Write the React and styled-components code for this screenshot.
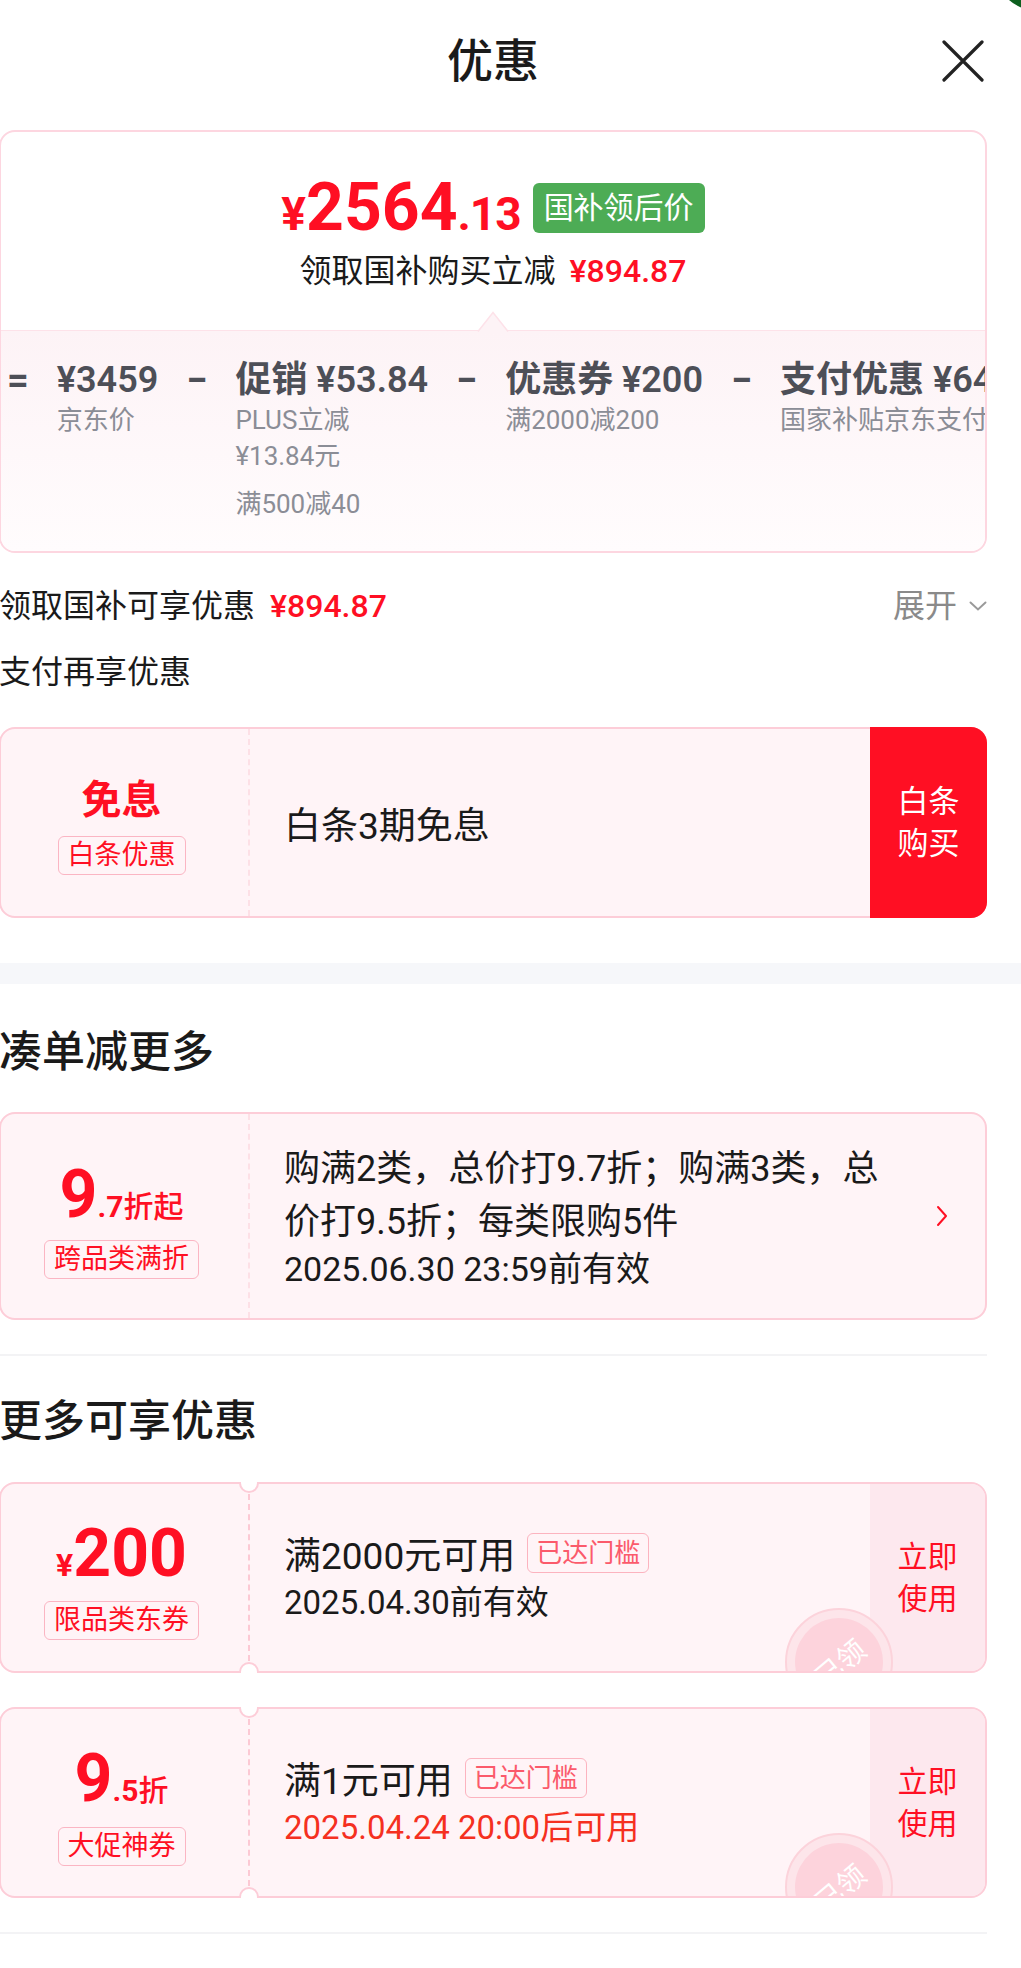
import React from 'react'
import styled, { createGlobalStyle } from 'styled-components'

const RED = '#ff0f23'
const PINK_BORDER = '#fdcdd8'

const GlobalStyle = createGlobalStyle`
  html, body {
    margin: 0;
    padding: 0;
    background: #ffffff;
  }
  body {
    font-family: Roboto, "Noto Sans CJK SC", sans-serif;
    color: #1a1a1a;
    overflow-x: hidden;
  }
`

const Page = styled.div`
  position: relative;
  width: 1021px;
  min-height: 1968px;
  overflow: hidden;
  background: #ffffff;
`

const Panel = styled.div`
  width: 988px;
  margin-left: -1px;
  display: flex;
  flex-direction: column;
`

// header
const Header = styled.header`
  height: 122px;
  display: grid;
  grid-template-columns: 1fr auto 1fr;
  align-items: center;
`

const Title = styled.h1`
  grid-column: 2;
  margin: 0;
  font-size: 46px;
  font-weight: 500;
  line-height: 1;
  color: #1a1a1a;
`

const CloseButton = styled.button`
  grid-column: 3;
  justify-self: end;
  margin-right: 3px;
  width: 42px;
  height: 42px;
  padding: 0;
  border: none;
  background: none;
  display: flex;
`

const CornerMark = styled.svg`
  position: absolute;
  top: 0;
  right: 0;
`

// summary card
const SummaryCard = styled.section`
  margin-top: 8px;
  border: 2px solid #fdd6e0;
  border-radius: 16px;
  overflow: hidden;
`

const SummaryTop = styled.div`
  position: relative;
  height: 198px;
  box-sizing: border-box;
  padding-top: 51px;
  display: flex;
  flex-direction: column;
  align-items: center;
`

const PriceRow = styled.div`
  display: flex;
  align-items: center;
  gap: 12px;
  height: 50px;
`

const Price = styled.div`
  color: ${RED};
  font-weight: 700;
  display: flex;
  align-items: baseline;
  line-height: 1;
`

const PricePart = styled.span`
  font-size: ${p => p.$size}px;
  letter-spacing: ${p => p.$tight ? '-1px' : '0'};
`

const GreenTag = styled.span`
  height: 50px;
  line-height: 50px;
  padding: 0 11px;
  border-radius: 6px;
  background: #4dac55;
  color: #ffffff;
  font-size: 30px;
`

const SubLine = styled.div`
  margin-top: 18px;
  font-size: 32px;
  line-height: 40px;
  color: #1a1a1a;
`

const RedAmount = styled.span`
  color: ${RED};
  font-weight: 500;
  margin-left: ${p => p.$gap || 14}px;
`

const Notch = styled.svg`
  position: absolute;
  bottom: -2px;
  left: 50%;
  transform: translateX(-50%);
`

const Breakdown = styled.div`
  height: 221px;
  box-sizing: border-box;
  border-top: 1.5px solid #fde2e9;
  background: linear-gradient(#fdf3f6, #fffcfd);
  padding: 27px 0 0 6px;
  display: flex;
  align-items: flex-start;
  gap: 28px;
  white-space: nowrap;
  overflow: hidden;
`

const Sign = styled.span`
  font-size: 38px;
  font-weight: 700;
  line-height: 44px;
  color: #4d4f57;
`

const BreakItem = styled.div`
  display: flex;
  flex-direction: column;
`

const BreakValue = styled.span`
  font-size: 36px;
  font-weight: 600;
  line-height: 44px;
  color: #4d4f57;
`

const BreakNote = styled.span`
  font-size: 26px;
  line-height: 36px;
  color: #8b8d96;
  margin-top: ${p => p.$gap || 0}px;
`

// info rows
const InfoRow = styled.div`
  margin-top: ${p => p.$top}px;
  height: 40px;
  display: flex;
  align-items: center;
  justify-content: space-between;
  font-size: 32px;
  line-height: 40px;
`

const Expand = styled.span`
  display: flex;
  align-items: center;
  gap: 12px;
  color: #8a8a8a;
`

const SectionTitle = styled.h2`
  margin: ${p => p.$top}px 0 0;
  font-size: 43px;
  font-weight: 500;
  line-height: 50px;
  color: #1a1a1a;
`

const Band = styled.div`
  margin-top: 45px;
  height: 21px;
  background: #f6f7fa;
`

const Divider = styled.div`
  margin-top: ${p => p.$top}px;
  height: 2px;
  background: #f3f3f5;
`

// offer cards
const Card = styled.div`
  position: relative;
  margin-top: ${p => p.$top}px;
  height: ${p => p.$h}px;
  box-sizing: border-box;
  display: flex;
  border: 2px solid ${PINK_BORDER};
  border-radius: 16px;
  background: #fff4f7;
`

const LeftCol = styled.div`
  flex: 0 0 241px;
  padding: ${p => p.$pt || 0}px 6px 0 0;
  border-right: 2px dashed ${p => p.$light ? '#fde0e6' : '#fcc9d4'};
  display: flex;
  flex-direction: column;
  align-items: center;
  justify-content: center;
`

const CutOut = styled.span`
  position: absolute;
  left: 238px;
  width: 20px;
  height: 20px;
  box-sizing: border-box;
  border-radius: 50%;
  background: #ffffff;
  border: 2px solid ${PINK_BORDER};
  ${p => p.$bottom
    ? 'bottom: -11px; clip-path: inset(0 0 9px 0);'
    : 'top: -11px; clip-path: inset(9px 0 0 0);'}
`

const Label = styled.span`
  color: ${RED};
  font-size: 40px;
  font-weight: 700;
  line-height: 48px;
`

const BigNumber = styled.div`
  display: flex;
  align-items: baseline;
  color: ${RED};
  font-weight: 700;
  line-height: 66px;
`

const NumPart = styled.span`
  font-size: ${p => p.$size}px;
  font-weight: ${p => p.$weight || 700};
`

const Tag = styled.span`
  margin-top: ${p => p.$top}px;
  padding: 0 9px;
  border: 1.5px solid #fbb5c3;
  border-radius: 6px;
  font-size: 27px;
  line-height: 37px;
  color: ${RED};
`

const Middle = styled.div`
  flex: 1;
  min-width: 0;
  padding: 0 ${p => p.$pr || 0}px 0 34px;
  display: flex;
  align-items: center;
  justify-content: space-between;
`

const MainText = styled.div`
  font-size: 37px;
  color: #1a1a1a;
`

const DealText = styled.div`
  display: flex;
  flex-direction: column;
  white-space: nowrap;
`

const DealLine = styled.span`
  font-size: ${p => p.$size || 34}px;
  line-height: ${p => p.$lh}px;
  color: #1a1a1a;
`

const CouponText = styled.div`
  display: flex;
  flex-direction: column;
`

const CouponTitle = styled.div`
  display: flex;
  align-items: center;
  gap: 12px;
  height: 44px;
  font-size: 37px;
  color: #1a1a1a;
`

const ReachedTag = styled.span`
  padding: 0 8px;
  border: 1.5px solid #fcb3bf;
  border-radius: 6px;
  font-size: 26px;
  line-height: 38px;
  color: #fb5a6b;
`

const CouponDate = styled.span`
  margin-top: 6px;
  font-size: 33px;
  line-height: 44px;
  color: ${p => p.$accent ? '#f5301f' : '#1a1a1a'};
`

const BuyButton = styled.div`
  flex: 0 0 117px;
  margin: -2px -2px -2px 0;
  border-radius: 0 16px 16px 0;
  background: ${RED};
  color: #ffffff;
  font-size: 31px;
  line-height: 42px;
  display: flex;
  align-items: center;
  justify-content: center;
  text-align: center;
`

const UseButton = styled.div`
  flex: 0 0 115px;
  border-radius: 0 14px 14px 0;
  background: #fde8ee;
  color: ${RED};
  font-size: 30px;
  line-height: 42px;
  display: flex;
  align-items: center;
  justify-content: center;
  text-align: center;
`

const StampLayer = styled.div`
  position: absolute;
  inset: 0;
  border-radius: 14px;
  overflow: hidden;
  pointer-events: none;
`

const Stamp = styled.div`
  position: absolute;
  left: 784px;
  top: 124px;
  width: 108px;
  height: 108px;
  box-sizing: border-box;
  border-radius: 50%;
  background: #fde5ea;
  border: 2px solid #fcd3db;
  display: flex;
  align-items: center;
  justify-content: center;
`

const StampInner = styled.div`
  width: 88px;
  height: 88px;
  border-radius: 50%;
  background: #fdd3dc;
  color: #ffffff;
  font-size: 28px;
  display: flex;
  align-items: center;
  justify-content: center;
  transform: rotate(-40deg);
`

const Chevron = ({ color = RED }) => (
  <svg width="14" height="22" viewBox="0 0 14 22">
    <polyline points="3,2 11,11 3,20" fill="none" stroke={color} strokeWidth="2" strokeLinecap="round" strokeLinejoin="round" />
  </svg>
)

const Coupon = ({ top, left, tag, title, date, accent }) => (
  <Card $top={top} $h={191}>
    <CutOut />
    <CutOut $bottom />
    <LeftCol $pt={6}>
      {left}
      <Tag $top={3}>{tag}</Tag>
    </LeftCol>
    <Middle>
      <CouponText>
        <CouponTitle>
          {title}
          <ReachedTag>已达门槛</ReachedTag>
        </CouponTitle>
        <CouponDate $accent={accent}>{date}</CouponDate>
      </CouponText>
    </Middle>
    <UseButton>立即<br />使用</UseButton>
    <StampLayer>
      <Stamp>
        <StampInner>已领</StampInner>
      </Stamp>
    </StampLayer>
  </Card>
)

export default function App() {
  return (
    <Page>
      <GlobalStyle />
      <CornerMark width="12" height="9" viewBox="0 0 12 9">
        <path d="M0 0 Q5 4.5 12 7.5 L12 0 Z" fill="#0d5f1f" />
      </CornerMark>

      <Panel>
        <Header>
          <Title>优惠</Title>
          <CloseButton aria-label="关闭">
            <svg width="42" height="42" viewBox="0 0 42 42">
              <path d="M2 2 L40 40 M40 2 L2 40" stroke="#222" strokeWidth="3.2" strokeLinecap="round" />
            </svg>
          </CloseButton>
        </Header>

        <SummaryCard>
          <SummaryTop>
            <PriceRow>
              <Price>
                <PricePart $size={46}>¥</PricePart>
                <PricePart $size={66}>2564</PricePart>
                <PricePart $size={46} $tight>.13</PricePart>
              </Price>
              <GreenTag>国补领后价</GreenTag>
            </PriceRow>
            <SubLine>
              领取国补购买立减<RedAmount>¥894.87</RedAmount>
            </SubLine>
            <Notch width="32" height="21" viewBox="0 0 32 21">
              <path d="M0 21 L16 1 L32 21 Z" fill="#fdf3f6" />
              <path d="M1 20.5 L16 1.5 L31 20.5" fill="none" stroke="#fde2e9" strokeWidth="1.5" />
            </Notch>
          </SummaryTop>
          <Breakdown>
            <Sign>=</Sign>
            <BreakItem>
              <BreakValue>¥3459</BreakValue>
              <BreakNote>京东价</BreakNote>
            </BreakItem>
            <Sign>−</Sign>
            <BreakItem>
              <BreakValue>促销 ¥53.84</BreakValue>
              <BreakNote>PLUS立减</BreakNote>
              <BreakNote>¥13.84元</BreakNote>
              <BreakNote $gap={12}>满500减40</BreakNote>
            </BreakItem>
            <Sign>−</Sign>
            <BreakItem>
              <BreakValue>优惠券 ¥200</BreakValue>
              <BreakNote>满2000减200</BreakNote>
            </BreakItem>
            <Sign>−</Sign>
            <BreakItem>
              <BreakValue>支付优惠 ¥64.87</BreakValue>
              <BreakNote>国家补贴京东支付</BreakNote>
            </BreakItem>
          </Breakdown>
        </SummaryCard>

        <InfoRow $top={33}>
          <span>领取国补可享优惠<RedAmount $gap={15}>¥894.87</RedAmount></span>
          <Expand>
            展开
            <svg width="18" height="10" viewBox="0 0 18 10">
              <polyline points="1.5,1.5 9,8.5 16.5,1.5" fill="none" stroke="#9a9a9a" strokeWidth="2" strokeLinecap="round" />
            </svg>
          </Expand>
        </InfoRow>
        <InfoRow $top={26}>支付再享优惠</InfoRow>

        <Card $top={35} $h={191}>
          <LeftCol $pt={6} $light>
            <Label>免息</Label>
            <Tag $top={11}>白条优惠</Tag>
          </LeftCol>
          <Middle>
            <MainText>白条3期免息</MainText>
          </Middle>
          <BuyButton>白条<br />购买</BuyButton>
        </Card>
      </Panel>

      <Band />

      <Panel>
        <SectionTitle $top={43}>凑单减更多</SectionTitle>
        <Card $top={35} $h={208}>
          <LeftCol $pt={8} $light>
            <BigNumber>
              <NumPart $size={66}>9</NumPart>
              <NumPart $size={30}>.7</NumPart>
              <NumPart $size={30} $weight={500}>折起</NumPart>
            </BigNumber>
            <Tag $top={0}>跨品类满折</Tag>
          </LeftCol>
          <Middle $pr={36}>
            <DealText>
              <DealLine $size={36} $lh={53}>购满2类，总价打9.7折；购满3类，总</DealLine>
              <DealLine $size={36} $lh={53}>价打9.5折；每类限购5件</DealLine>
              <DealLine $lh={41}>2025.06.30 23:59前有效</DealLine>
            </DealText>
            <Chevron />
          </Middle>
        </Card>

        <Divider $top={34} />

        <SectionTitle $top={40}>更多可享优惠</SectionTitle>
        <Coupon
          top={36}
          left={
            <BigNumber>
              <NumPart $size={32}>¥</NumPart>
              <NumPart $size={66}>200</NumPart>
            </BigNumber>
          }
          tag="限品类东券"
          title="满2000元可用"
          date="2025.04.30前有效"
        />
        <Coupon
          top={34}
          left={
            <BigNumber>
              <NumPart $size={66}>9</NumPart>
              <NumPart $size={30}>.5</NumPart>
              <NumPart $size={30} $weight={500}>折</NumPart>
            </BigNumber>
          }
          tag="大促神券"
          title="满1元可用"
          date="2025.04.24 20:00后可用"
          accent
        />

        <Divider $top={34} />
      </Panel>
    </Page>
  )
}
